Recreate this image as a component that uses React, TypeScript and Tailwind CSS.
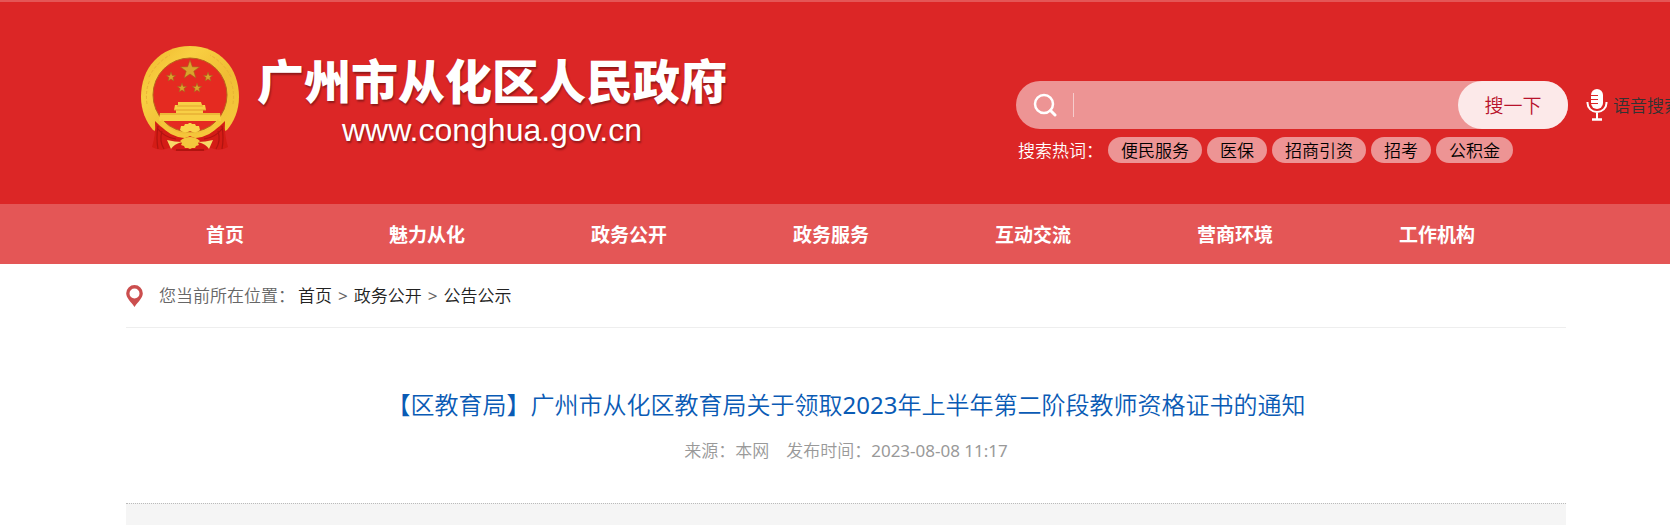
import { useState } from "react";

const navItems = ["首页", "魅力从化", "政务公开", "政务服务", "互动交流", "营商环境", "工作机构"];
const hotWords = ["便民服务", "医保", "招商引资", "招考", "公积金"];
const crumbs = ["首页", "政务公开", "公告公示"];

const stars = [
  { cx: 50, cy: 24, r: 10 },
  { cx: 31, cy: 31, r: 5 },
  { cx: 68, cy: 31, r: 5 },
  { cx: 42, cy: 42, r: 5 },
  { cx: 57, cy: 42, r: 5 },
];

function starPoints(cx: number, cy: number, r: number) {
  return Array.from({ length: 10 }, (_, i) => {
    const radius = i % 2 === 0 ? r : r * 0.4;
    const angle = (Math.PI / 5) * i - Math.PI / 2;
    return `${(cx + radius * Math.cos(angle)).toFixed(1)},${(cy + radius * Math.sin(angle)).toFixed(1)}`;
  }).join(" ");
}

function Emblem() {
  return (
    <svg viewBox="0 0 100 106" className="w-[100px] h-[106px] shrink-0" aria-hidden="true">
      <defs>
        <linearGradient id="gold" x1="0" y1="0" x2="1" y2="1">
          <stop offset="0" stopColor="#efb62c" />
          <stop offset="0.3" stopColor="#f8cf42" />
          <stop offset="0.6" stopColor="#f0bd34" />
          <stop offset="1" stopColor="#f6cb3e" />
        </linearGradient>
      </defs>
      <path d="M50 0 C80 0 99 22 99 51 C99 64 94 76 87 84 C76 90 63 92 50 92 C37 92 24 90 13 84 C6 76 1 64 1 51 C1 22 20 0 50 0 Z" fill="url(#gold)" />
      <circle cx="50" cy="49" r="37" fill="#e52a21" stroke="#b9641d" strokeWidth="1" />
      <path d="M9 31 Q16 17 30 9 M7 58 Q5 44 10 34 M91 31 Q84 17 70 9 M93 58 Q95 44 90 34" fill="none" stroke="#e9b035" strokeWidth="1" strokeDasharray="3 2" />
      {stars.map(({ cx, cy, r }) => (
        <polygon key={`${cx}-${cy}`} points={starPoints(cx, cy, r)} fill="#d9a32c" stroke="#a8601c" strokeWidth="0.6" />
      ))}
      <path d="M38 56 H61 L62 59 H65 L66 64 H63 V67 H80 L81 75 H19 L20 67 H36 V64 H34 L35 59 H38 Z" fill="#f8cf45" />
      <path d="M34 64 H66 M20 68 H80" stroke="#e0a02c" strokeWidth="1" />
      <path d="M37 60 H63" stroke="#e3a52e" strokeWidth="1" />
      {/* ribbon drapery under the wreath */}
      <path d="M15 75 Q25 86 38 90 Q44 93 50 90 Q56 93 62 90 Q75 86 85 75 Q84 88 88 101 Q80 106 71 102 L64 105 H36 L29 102 Q20 106 12 101 Q16 88 15 75 Z" fill="#d41c16" />
      <path d="M18 80 Q16 92 18 103 M22 85 Q19 95 24 103 M17 82 Q25 92 36 93 M82 80 Q84 92 82 103 M78 85 Q81 95 76 103 M83 82 Q75 92 64 93" fill="none" stroke="#b01410" strokeWidth="1.2" />
      <path d="M36 104 H64" stroke="#a5120f" strokeWidth="1.5" />
      <path d="M22 73 Q30 86 44 88 Q50 85 56 88 Q70 86 78 73 L80 78 Q71 91 55 92 Q50 88 45 92 Q29 91 20 78 Z" fill="#f5c63b" />
      <path d="M40 84 L41 80 H44 L45 78 H48 L49 77 H51 L52 78 H55 L56 80 H59 L60 84 Q56 88 50 85 Q44 88 40 84 Z" fill="#fad54b" />
      <path d="M40 95 Q44 91 50 91 Q56 91 60 95 L58 97 L59 99 L56 100 L55 102 H52 L50 103 L48 102 H45 L44 100 L41 99 L42 97 Z" fill="#f3c63c" />
      <path d="M27 94 Q35 96 42 96 Q34 98 31 103 Z M73 94 Q65 96 58 96 Q66 98 69 103 Z" fill="#f7d868" />
    </svg>
  );
}

function MicIcon() {
  return (
    <svg viewBox="0 0 22 32" className="w-[22px] h-8 shrink-0" aria-hidden="true">
      <rect x="5" y="0" width="12" height="20" rx="6" fill="#fff" />
      <path d="M5 6.5 H12 M5 10.5 H12 M5 14.5 H12" stroke="#dc2626" strokeWidth="1.2" />
      <path d="M1.5 13 V14 A9.5 9 0 0 0 20.5 14 V13 M11 23 V30" fill="none" stroke="#fff" strokeWidth="2" />
      <path d="M6 30.5 H16" stroke="#fff" strokeWidth="2.5" />
    </svg>
  );
}

function SearchBox() {
  const [keyword, setKeyword] = useState("");

  return (
    <div className="pt-[79px] w-[654px] shrink-0">
      <div className="flex items-center">
        <form
          role="search"
          onSubmit={(e) => e.preventDefault()}
          className="flex items-center w-[552px] h-12 shrink-0 rounded-full bg-[#ed9494]"
        >
          <svg viewBox="0 0 24 24" className="w-6 h-6 ml-[17px] shrink-0" fill="none" stroke="#fff" aria-hidden="true">
            <circle cx="11" cy="11" r="9" strokeWidth="2.5" />
            <path d="M17.5 17.5 L22 22" strokeWidth="3" strokeLinecap="round" />
          </svg>
          <span className="w-px h-6 ml-4 bg-[#f6cccc]" />
          <input
            aria-label="搜索"
            value={keyword}
            onChange={(e) => setKeyword(e.target.value)}
            className="flex-1 min-w-0 h-full px-3 bg-transparent outline-none text-[17px]"
          />
          <button type="submit" className="w-[110px] h-full rounded-full bg-[#fce9e9] text-[#b8122b] text-[19px]">
            搜一下
          </button>
        </form>
        <a href="#voice" className="flex items-center gap-[5px] ml-[18px] text-[17px] text-[#333]">
          <MicIcon />
          语音搜索
        </a>
      </div>
      <div className="flex items-center gap-[5px] mt-2 pl-[2px] text-[17px] leading-[26px]">
        <span className="text-white">搜索热词：</span>
        {hotWords.map((word) => (
          <a key={word} href="#hot" className="rounded-full bg-[#ed9494] px-[13px] text-black">
            {word}
          </a>
        ))}
      </div>
    </div>
  );
}

export default function App() {
  return (
    <div
      lang="zh-CN"
      className="overflow-hidden whitespace-nowrap bg-white font-[350] font-['Noto_Sans_CJK_SC',sans-serif]"
    >
      <header className="flex justify-between h-[204px] border-t-2 border-[#e45656] bg-[#dc2626] pl-[140px]">
        <a href="#home" className="flex items-start gap-[17px] pt-11">
          <Emblem />
          <span className="flex flex-col items-center gap-2 pt-2 text-white [text-shadow:1px_2px_2px_rgb(0_0_0/0.35)]">
            <span className="text-[47px] leading-[50px] font-black">广州市从化区人民政府</span>
            <span className="text-[32px] leading-9 font-normal font-['Liberation_Sans',sans-serif]">
              www.conghua.gov.cn
            </span>
          </span>
        </a>
        <SearchBox />
      </header>

      <nav className="bg-[#e45656] pl-[124px] pr-[132px]">
        <ul className="grid grid-cols-7">
          {navItems.map((item) => (
            <li key={item}>
              <a href="#nav" className="block text-center text-[19px] leading-[60px] font-bold text-white">
                {item}
              </a>
            </li>
          ))}
        </ul>
      </nav>

      <main className="pl-[126px] pr-[104px] font-['Noto_Sans','Noto_Sans_CJK_SC',sans-serif]">
        <div className="flex items-center h-16 border-b border-[#eee] text-[17px] text-[#666]">
          <svg viewBox="0 0 17 22" className="w-[17px] h-[22px] mr-4 shrink-0" aria-hidden="true">
            <path
              fillRule="evenodd"
              d="M8.5 0 A8.3 8.3 0 0 1 16.8 8.3 C16.8 13 12 17 8.5 22 C5 17 0.2 13 0.2 8.3 A8.3 8.3 0 0 1 8.5 0 Z M8.5 3.5 A5 5 0 1 0 8.5 13.5 A5 5 0 1 0 8.5 3.5 Z"
              fill="#cb4e4e"
            />
          </svg>
          <span className="mr-[3px]">您当前所在位置：</span>
          {crumbs.map((crumb, i) => (
            <span key={crumb}>
              {i > 0 && <span className="mx-[6px] font-normal">&gt;</span>}
              <a href="#crumb" className="text-[#222]">{crumb}</a>
            </span>
          ))}
        </div>

        <article className="text-center">
          <h1 className="pt-[59px] text-[24px] leading-9 text-[#0a5bb5]">
            【区教育局】广州市从化区教育局关于领取<span className="font-normal">2023</span>年上半年第二阶段教师资格证书的通知
          </h1>
          <p className="pt-[13px] pb-[37px] text-[17px] leading-[30px] text-[#999]">
            来源：本网　发布时间：<time className="font-normal">2023-08-08 11:17</time>
          </p>
          <div className="h-[22px] border-t border-dotted border-[#bbb] bg-[#f5f5f5]" />
        </article>
      </main>
    </div>
  );
}
